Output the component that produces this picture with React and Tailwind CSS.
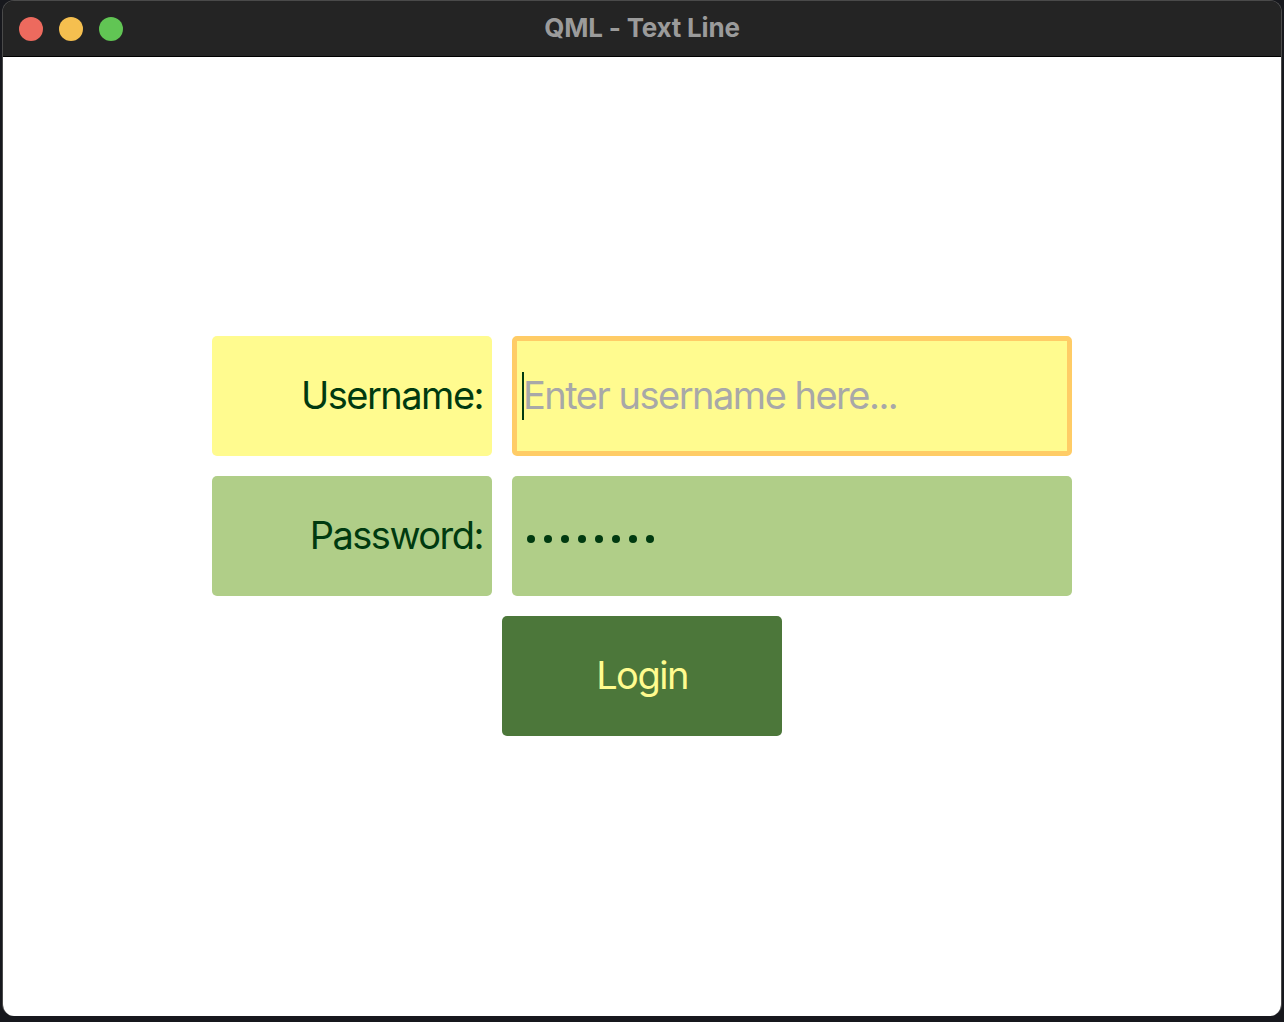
import { useState } from "react";

const font = { fontFamily: "Inter, 'Noto Sans', sans-serif" };

const TrafficLights = () => (
  <div className="flex items-center gap-[16px] pl-[16px]">
    <span className="w-[24px] h-[24px] rounded-full bg-[#ed6a5e]" />
    <span className="w-[24px] h-[24px] rounded-full bg-[#f5bf4f]" />
    <span className="w-[24px] h-[24px] rounded-full bg-[#61c554]" />
  </div>
);

export default function App() {
  const [username, setUsername] = useState("");

  return (
    <div className="w-[1284px] h-[1022px] bg-[#17181d] px-[2px] pb-[6px]" style={font}>
      <div className="h-full flex flex-col rounded-[12px] overflow-hidden border border-[#4a4a4a] border-b-0">
        {/* TITLE BAR */}
        <div className="relative h-[56px] shrink-0 bg-[#242424] border-b border-black flex items-center">
          <TrafficLights />
          <div className="absolute inset-0 flex items-center justify-center pb-[2px] text-[26px] font-bold text-[#9b9b9b] tracking-[-0.2px]">
            QML - Text Line
          </div>
        </div>

        {/* CONTENT */}
        <div className="flex-1 bg-white flex flex-col items-center justify-center pb-[2px]">
          <div className="flex flex-col items-center gap-[20px]">
            <div className="grid grid-cols-[280px_560px] gap-[20px]">
              <div className="h-[120px] rounded-[5px] bg-[#fffb8f] flex items-center justify-end pr-[9px] text-[38px] text-[#003a10] tracking-[-1.5px]">
                Username:
              </div>
              <div className="h-[120px] rounded-[5px] bg-[#fffb8f] border-[5px] border-[#ffcc66] flex items-center pl-[5px]">
                <span className="shrink-0 w-[2px] h-[48px] bg-[#003a10]" />
                <input
                  value={username}
                  onChange={(e) => setUsername(e.target.value)}
                  placeholder="Enter username here..."
                  className="flex-1 min-w-0 -ml-[1px] bg-transparent outline-none text-[38px] text-[#003a10] placeholder:text-[#a8a8a8] tracking-[-1.5px] pl-0"
                />
              </div>

              <div className="h-[120px] rounded-[5px] bg-[#b0ce88] flex items-center justify-end pr-[9px] text-[38px] text-[#003a10] tracking-[-1.5px]">
                Password:
              </div>
              <div className="h-[120px] rounded-[5px] bg-[#b0ce88] flex items-center pl-[15px] pt-[6px] gap-[9px]">
                {[0, 1, 2, 3, 4, 5, 6, 7].map((i) => (
                  <span key={i} className="w-[8px] h-[8px] rounded-full bg-[#003a10]" />
                ))}
              </div>
            </div>

            <button className="w-[280px] h-[120px] rounded-[5px] bg-[#4c773a] text-[38px] text-[#fffb8f] tracking-[-1.5px]">
              Login
            </button>
          </div>
        </div>
      </div>
    </div>
  );
}
